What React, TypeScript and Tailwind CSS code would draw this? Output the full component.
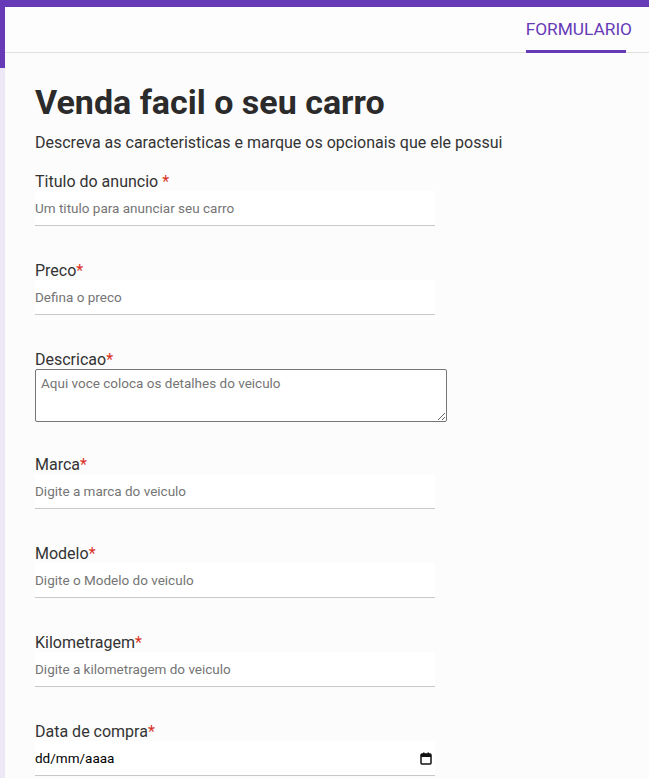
import React from 'react'

const font = { fontFamily: 'Roboto, "Liberation Sans", Arial, sans-serif' }

function Label({ text, spaced }: { text: string; spaced?: boolean }) {
  return (
    <label className="block text-[16px] leading-[19px] text-[#333]">
      {text}
      {spaced ? ' ' : ''}
      <span className="text-[#d93025]">*</span>
    </label>
  )
}

function Field({ label, placeholder, spaced }: { label: string; placeholder: string; spaced?: boolean }) {
  return (
    <div className="mb-[35px]">
      <Label text={label} spaced={spaced} />
      <input
        type="text"
        placeholder={placeholder}
        className="block w-[400px] h-[35px] bg-white border-b border-[#c8c8c8] text-[13.5px] text-[#333] placeholder:text-[#757575] outline-none"
      />
    </div>
  )
}

function CalendarIcon() {
  return (
    <svg width="12" height="13" viewBox="0 0 12 13" className="text-[#111]">
      <rect x="1" y="2" width="10" height="10" rx="1" fill="none" stroke="currentColor" strokeWidth="1.5" />
      <rect x="1" y="2" width="10" height="3" fill="currentColor" />
      <rect x="3" y="0.5" width="1.5" height="2" fill="currentColor" />
      <rect x="7.5" y="0.5" width="1.5" height="2" fill="currentColor" />
    </svg>
  )
}

export default function App() {
  return (
    <div className="min-h-screen bg-[#fcfcfc]" style={font}>
      <div className="h-[7px] bg-[#673ab7]" />
      <div className="flex">
        <div className="w-[5px] shrink-0 flex flex-col">
          <div className="h-[61px] bg-[#673ab7]" />
          <div className="flex-1 bg-[#ede7f6]" />
        </div>
        <div className="flex-1">
          <header className="h-[46px] bg-[#fdfdfd] border-b border-[#e0e0e0] flex justify-end">
            <div className="relative pr-[17px] flex items-center">
              <span className="text-[17.3px] text-[#673ab7]">FORMULARIO</span>
              <div className="absolute left-0 bottom-[-1px] w-[100px] h-[3px] bg-[#673ab7]" />
            </div>
          </header>
          <main className="pl-[30px] pt-[30px] pb-10">
            <h1 className="text-[34px] leading-[38px] font-bold text-[#2b2b2b]">Venda facil o seu carro</h1>
            <p className="mt-[12px] text-[16px] leading-[19px] text-[#333]">
              Descreva as caracteristicas e marque os opcionais que ele possui
            </p>
            <div className="mt-[20px]">
              <Field label="Titulo do anuncio" placeholder="Um titulo para anunciar seu carro" spaced />
              <Field label="Preco" placeholder="Defina o preco" />
              <div className="mb-[33px]">
                <Label text="Descricao" />
                <textarea
                  placeholder="Aqui voce coloca os detalhes do veiculo"
                  className="block w-[412px] h-[53px] bg-white border border-[#767676] rounded-[2px] px-[5px] py-[3px] text-[13.5px] text-[#333] placeholder:text-[#757575]"
                />
              </div>
              <Field label="Marca" placeholder="Digite a marca do veiculo" />
              <Field label="Modelo" placeholder="Digite o Modelo do veiculo" />
              <Field label="Kilometragem" placeholder="Digite a kilometragem do veiculo" />
              <div>
                <Label text="Data de compra" />
                <div className="relative w-[400px] h-[35px] bg-white border-b border-[#c8c8c8]">
                  <input
                    type="text"
                    placeholder="dd/mm/aaaa"
                    className="block w-full h-full bg-transparent text-[13.5px] text-black placeholder:text-black outline-none"
                  />
                  <div className="absolute right-[3px] top-[11px]">
                    <CalendarIcon />
                  </div>
                </div>
              </div>
            </div>
          </main>
        </div>
      </div>
    </div>
  )
}
